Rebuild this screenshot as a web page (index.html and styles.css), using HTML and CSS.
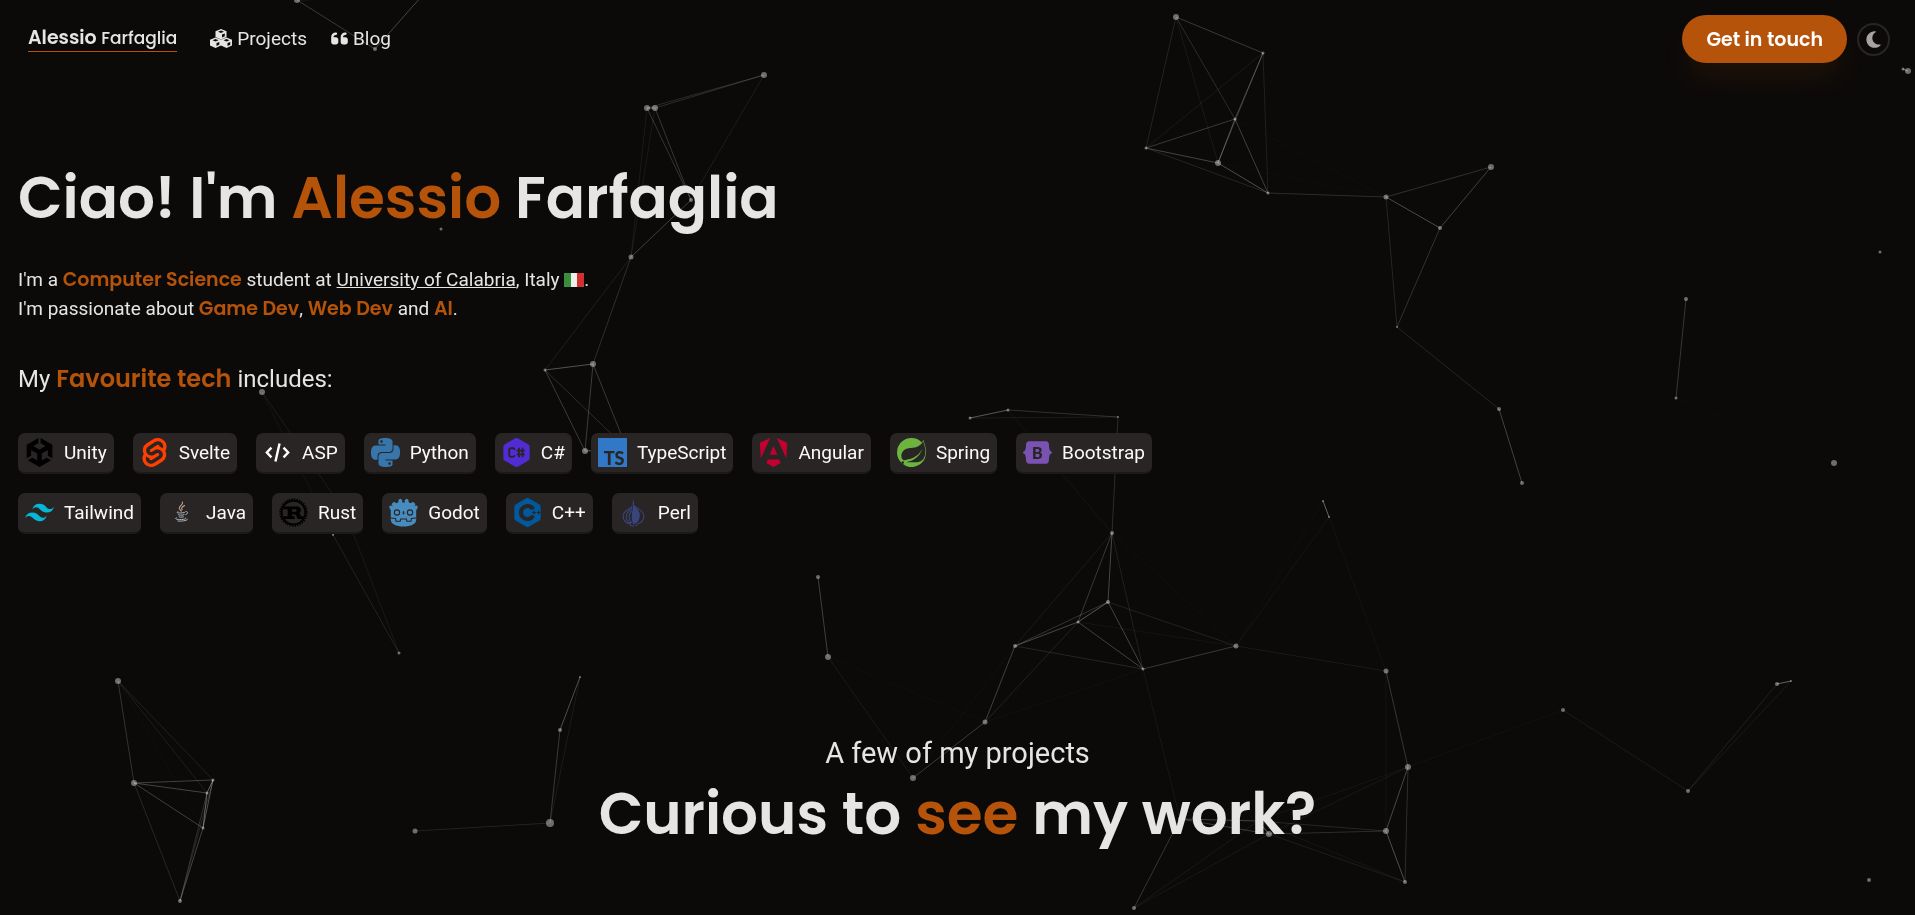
FILE: index.html
```html
<!DOCTYPE html>
<html lang="en">
<head>
<meta charset="utf-8">
<meta name="viewport" content="width=device-width, initial-scale=1">
<title>Alessio Farfaglia</title>
<link rel="stylesheet" href="styles.css">
<script src="network.js" defer></script>
</head>
<body>
<canvas class="network" id="network" aria-hidden="true"></canvas>

<header class="topbar">
  <nav class="topbar-nav" aria-label="Main">
    <a class="brand" href="#"><span class="brand-first">Alessio</span> <span class="brand-last">Farfaglia</span></a>
    <a class="nav-link" href="#projects">
      <svg class="nav-icon nav-icon-wide" viewBox="0 0 22 19" aria-hidden="true">
        <path class="cube" d="M11 0 16.5 2.2V8L11 10.6 5.500 8V2.200Z M5.500 8.400 11 10.800V16.400L5.500 19 0 16.400V10.800Z M16.500 8.400 22 10.800V16.400L16.500 19 11 16.400V10.800Z"/>
        <path class="cube-face" d="M11 1.500 14 2.700 11 3.900 8 2.700Z M5.500 10 8.500 11.200 5.500 12.400 2.500 11.200Z M16.500 10 19.500 11.200 16.500 12.400 13.500 11.200Z M12 5.600 14.800 4.400V7.200L12 8.500Z M6.500 14.100 9.300 12.900V15.700L6.500 17Z M17.500 14.100 20.300 12.900V15.700L17.500 17Z"/>
      </svg>Projects</a>
    <a class="nav-link" href="#blog">
      <svg class="nav-icon" viewBox="0 0 448 512" aria-hidden="true"><path d="M0 216C0 149.700 53.700 96 120 96h8c17.700 0 32 14.300 32 32s-14.300 32-32 32h-8c-30.900 0-56 25.100-56 56v8h64c35.300 0 64 28.700 64 64v64c0 35.300-28.700 64-64 64H64c-35.300 0-64-28.700-64-64V216zm256 0c0-66.300 53.700-120 120-120h8c17.700 0 32 14.300 32 32s-14.300 32-32 32h-8c-30.900 0-56 25.100-56 56v8h64c35.300 0 64 28.700 64 64v64c0 35.300-28.700 64-64 64H320c-35.300 0-64-28.700-64-64V216z"/></svg>Blog</a>
  </nav>
  <div class="topbar-actions">
    <button class="cta" type="button">Get in touch</button>
    <button class="theme-toggle" type="button" aria-label="Toggle dark mode">
      <svg class="theme-icon" viewBox="0 0 384 512" aria-hidden="true"><path d="M223.500 32C100 32 0 132.300 0 256S100 480 223.500 480c60.600 0 115.500-24.200 155.800-63.400c5-4.900 6.300-12.500 3.100-18.700s-10.100-9.700-17-8.500c-9.800 1.700-19.800 2.600-30.100 2.600c-96.900 0-175.500-78.800-175.500-176c0-65.800 36-123.100 89.300-153.300c6.100-3.500 9.200-10.500 7.700-17.300s-7.300-11.900-14.300-12.500c-6.300-.5-12.600-.8-19-.8z"/></svg>
    </button>
  </div>
</header>

<main>
  <section class="hero">
    <h1 class="display">Ciao! I'm <span class="accent">Alessio</span> Farfaglia</h1>
    <p class="intro">I'm a <strong>Computer Science</strong> student at <a href="#unical">University of Calabria</a>, Italy <svg class="flag" viewBox="0 0 20 14" role="img" aria-label="Flag of Italy"><rect width="20" height="14" rx="2" fill="#eeeeee"/><path fill="#388e3c" d="M2 0H7V14H2A2 2 0 0 1 0 12V2A2 2 0 0 1 2 0Z"/><path fill="#d32f2f" d="M13 0H18A2 2 0 0 1 20 2V12A2 2 0 0 1 18 14H13Z"/></svg>.<br>
    I'm passionate about <strong>Game Dev</strong>, <strong>Web Dev</strong> and <strong>AI</strong>.</p>
    <h2 class="tech-title">My <strong>Favourite tech</strong> includes:</h2>
    <ul class="tech-list">
      <li class="chip"><svg class="chip-icon" viewBox="0 0 24 24" fill="#000" aria-hidden="true"><path d="m12.9288 4.2939 3.7997 2.1929c.1366.077.1415.2905 0 .3675l-4.515 2.6076a.4192.4192 0 0 1-.4246 0L7.274 6.8543c-.139-.0745-.1415-.293 0-.3675l3.7972-2.193V0L1.3758 5.5977V16.793l3.7177-2.1456v-4.3858c-.0025-.1565.1813-.2682.318-.1838l4.5148 2.6076a.4252.4252 0 0 1 .2136.3676v5.2127c.0025.1565-.1813.2682-.3179.1838l-3.7996-2.1929-3.7178 2.1457L12 24l9.6954-5.5977-3.7178-2.1457-3.7996 2.1929c-.1341.082-.3229-.0248-.3179-.1838V13.053c0-.1565.087-.2956.2136-.3676l4.5149-2.6076c.134-.082.3228.0224.3179.1838v4.3858l3.7177 2.1456V5.5977L12.9288 0Z"/></svg>Unity</li>
      <li class="chip"><svg class="chip-icon" viewBox="0 0 24 24" fill="#ff3e00" aria-hidden="true"><path d="M10.354 21.125a4.44 4.44 0 0 1-4.765-1.767 4.109 4.109 0 0 1-.703-3.107 3.898 3.898 0 0 1 .134-.522l.105-.321.287.21a7.21 7.21 0 0 0 2.186 1.092l.208.063-.02.208a1.253 1.253 0 0 0 .226.83 1.337 1.337 0 0 0 1.435.533 1.231 1.231 0 0 0 .343-.15l5.59-3.562a1.164 1.164 0 0 0 .524-.778 1.242 1.242 0 0 0-.211-.937 1.338 1.338 0 0 0-1.435-.533 1.23 1.23 0 0 0-.343.15l-2.133 1.36a4.078 4.078 0 0 1-1.135.499 4.44 4.44 0 0 1-4.765-1.766 4.108 4.108 0 0 1-.702-3.108 3.855 3.855 0 0 1 1.742-2.582l5.589-3.563a4.072 4.072 0 0 1 1.135-.499 4.44 4.44 0 0 1 4.765 1.767 4.109 4.109 0 0 1 .703 3.107 3.943 3.943 0 0 1-.134.522l-.105.321-.286-.21a7.204 7.204 0 0 0-2.187-1.093l-.208-.063.02-.207a1.255 1.255 0 0 0-.226-.831 1.337 1.337 0 0 0-1.435-.532 1.231 1.231 0 0 0-.343.15L8.62 9.368a1.162 1.162 0 0 0-.524.778 1.24 1.24 0 0 0 .211.937 1.338 1.338 0 0 0 1.435.533 1.235 1.235 0 0 0 .344-.151l2.132-1.36a4.067 4.067 0 0 1 1.135-.498 4.44 4.44 0 0 1 4.765 1.766 4.108 4.108 0 0 1 .702 3.108 3.857 3.857 0 0 1-1.742 2.583l-5.589 3.562a4.072 4.072 0 0 1-1.135.499m10.358-17.95C18.484-.015 14.082-.96 10.9 1.068L5.31 4.63a6.412 6.412 0 0 0-2.896 4.295 6.753 6.753 0 0 0 .666 4.336 6.43 6.43 0 0 0-.96 2.396 6.833 6.833 0 0 0 1.168 5.167c2.229 3.19 6.63 4.135 9.812 2.108l5.59-3.562a6.41 6.41 0 0 0 2.896-4.295 6.756 6.756 0 0 0-.665-4.336 6.429 6.429 0 0 0 .958-2.396 6.831 6.831 0 0 0-1.167-5.168Z"/></svg>Svelte</li>
      <li class="chip"><svg class="chip-icon" viewBox="0 0 24 24" fill="none" stroke="#fff" stroke-width="2" aria-hidden="true"><path d="M7 8 3.200 12 7 16M17 8 20.800 12 17 16M13.700 4.600 10.300 19.400"/></svg>ASP</li>
      <li class="chip"><svg class="chip-icon" viewBox="0 0 24 24" fill="#3776ab" aria-hidden="true"><path d="M14.25.18l.9.2.73.26.59.3.45.32.34.34.25.34.16.33.1.3.04.26.02.2-.01.13V8.500l-.05.63-.13.55-.21.46-.26.38-.3.31-.33.25-.35.19-.35.14-.33.1-.3.07-.26.04-.21.02H8.770l-.69.05-.59.14-.5.22-.41.27-.33.32-.27.35-.2.36-.15.37-.1.35-.07.32-.04.27-.02.21v3.060H3.170l-.21-.03-.28-.07-.32-.12-.35-.18-.36-.26-.36-.36-.35-.46-.32-.59-.28-.73-.21-.88-.14-1.050-.05-1.230.06-1.220.16-1.040.24-.87.32-.71.36-.57.4-.44.42-.33.42-.24.4-.16.36-.1.32-.05.24-.01h.16l.06.01h8.160v-.83H6.180l-.01-2.750-.02-.37.05-.34.11-.31.17-.28.25-.26.31-.23.38-.2.44-.18.51-.15.58-.12.64-.1.71-.06.77-.04.84-.02 1.270.05zm-6.300 1.980l-.23.33-.08.41.08.41.23.34.33.22.41.09.41-.09.33-.22.23-.34.08-.41-.08-.41-.23-.33-.33-.22-.41-.09-.41.09zm13.090 3.950l.28.06.32.12.35.18.36.27.36.35.35.47.32.59.28.73.21.88.14 1.040.05 1.230-.06 1.230-.16 1.040-.24.86-.32.71-.36.57-.4.45-.42.33-.42.24-.4.16-.36.09-.32.05-.24.02-.16-.01h-8.220v.82h5.840l.01 2.760.02.36-.05.34-.11.31-.17.29-.25.25-.31.24-.38.2-.44.17-.51.15-.58.13-.64.09-.71.07-.77.04-.84.01-1.270-.04-1.070-.14-.9-.2-.73-.25-.59-.3-.45-.33-.34-.34-.25-.34-.16-.33-.1-.3-.04-.25-.02-.2.01-.13v-5.340l.05-.64.13-.54.21-.46.26-.38.3-.32.33-.24.35-.2.35-.14.33-.1.3-.06.26-.04.21-.02.13-.01h5.840l.69-.05.59-.14.5-.21.41-.28.33-.32.27-.35.2-.36.15-.36.1-.35.07-.32.04-.28.02-.21V6.070h2.090l.14.01zm-6.470 14.250l-.23.33-.08.41.08.41.23.33.33.23.41.08.41-.08.33-.23.23-.33.08-.41-.08-.41-.23-.33-.33-.23-.41-.08-.41.08z"/></svg>Python</li>
      <li class="chip"><svg class="chip-icon" viewBox="0 0 24 24" aria-hidden="true"><path fill="#512bd4" d="M12 0Q12.600 0 13.100.3L21.900 5.300Q22.900 5.900 22.900 7V17Q22.900 18.100 21.900 18.700L13.100 23.700Q12 24.300 10.900 23.700L2.100 18.700Q1.100 18.100 1.100 17V7Q1.100 5.900 2.100 5.300L10.900.3Q11.400 0 12 0Z"/><g fill="none" stroke="#292524" stroke-width="1.500"><path d="M10.300 10V9.700Q10.300 8.400 9 8.400H7.500Q6 8.400 6 9.900V14.100Q6 15.600 7.500 15.600H9Q10.300 15.600 10.300 14.300V14M14 8V16M17 8V16M12.200 10.500H18.800M12.200 13.500H18.800"/></g></svg>C#</li>
      <li class="chip"><svg class="chip-icon" viewBox="0 0 24 24" aria-hidden="true"><path fill="#3178c6" d="M0 0H24V24H0Z"/><text class="ts-mark" x="22" y="22">TS</text></svg>TypeScript</li>
      <li class="chip"><svg class="chip-icon" viewBox="0 0 24 24" fill="#c3002f" aria-hidden="true"><path d="M16.712 17.711H7.288l-1.204 2.916L12 24l5.916-3.373-1.204-2.916ZM14.692 0l7.832 16.855.814-12.856L14.692 0ZM9.308 0 .662 3.999l.814 12.856L9.308 0Zm-.405 13.930h6.198L12 6.396 8.903 13.930Z"/></svg>Angular</li>
      <li class="chip"><svg class="chip-icon" viewBox="0 0 24 24" fill="#6db33f" aria-hidden="true"><path d="M21.8537 1.4158a10.4504 10.4504 0 0 1-1.284 2.2471A11.9666 11.9666 0 1 0 3.8518 20.7757l.4445.3951a11.9543 11.9543 0 0 0 19.6316-8.2971c.3457-3.0126-.568-6.8649-2.0742-11.458zM5.5805 20.8745a1.0174 1.0174 0 1 1-.1482-1.4323 1.0396 1.0396 0 0 1 .1482 1.4323zm16.1991-3.5806c-2.9385 3.9263-9.2601 2.5928-13.2852 2.7904 0 0-.7161.0494-1.4323.1481 0 0 .2717-.1234.6174-.2469 2.8398-.9877 4.1732-1.1853 5.9018-2.0743 3.2349-1.6545 6.4698-5.2844 7.1118-9.0379-1.2347 3.6053-4.9881 6.7167-8.3959 7.9761-2.3459.8643-6.5685 1.7039-6.5685 1.7039l-.1729-.0988c-2.8645-1.4076-2.9632-7.6304 2.2718-9.6306 2.2966-.889 4.4696-.395 6.9637-.9877 2.6422-.6174 5.7043-2.5929 6.939-5.1857 1.3828 4.1732 3.062 10.643.0493 14.6434z"/></svg>Spring</li>
      <li class="chip"><svg class="chip-icon" viewBox="0 0 24 24" aria-hidden="true"><path fill="#7952b3" d="M5 2.600H19Q21.300 2.800 21.500 5.500C21.600 8.600 21.800 10.700 24 11.500V12.500C21.800 13.300 21.600 15.400 21.500 18.500Q21.300 21.200 19 21.400H5Q2.700 21.200 2.500 18.500C2.400 15.400 2.200 13.300 0 12.500V11.500C2.200 10.700 2.400 8.600 2.500 5.500Q2.700 2.800 5 2.600Z"/><text class="b-mark" x="12" y="17">B</text></svg>Bootstrap</li>
      <li class="chip"><svg class="chip-icon" viewBox="0 0 24 24" fill="#06b6d4" aria-hidden="true"><path d="M12 4.800c-3.200 0-5.200 1.600-6 4.800 1.200-1.600 2.600-2.200 4.200-1.800.913.228 1.565.89 2.288 1.624C13.666 10.618 15.027 12 18 12c3.200 0 5.200-1.600 6-4.800-1.200 1.600-2.600 2.200-4.200 1.800-.913-.228-1.565-.89-2.288-1.624C16.337 6.182 14.976 4.800 12 4.800ZM6 12c-3.200 0-5.200 1.600-6 4.800 1.200-1.600 2.600-2.200 4.200-1.800.913.228 1.565.89 2.288 1.624C7.666 17.818 9.027 19.200 12 19.200c3.200 0 5.200-1.600 6-4.800-1.200 1.600-2.600 2.200-4.200 1.800-.913-.228-1.565-.89-2.288-1.624C10.337 13.382 8.976 12 6 12Z"/></svg>Tailwind</li>
      <li class="chip"><svg class="chip-icon" viewBox="-2 0 33 33" fill="none" stroke-linecap="round" aria-hidden="true"><path stroke="#c9a893" stroke-width="1.200" d="M15.500 4.500C17 8 10.500 9.500 12.200 12.500L14.300 15M18 8.500C15.500 10 13.800 11.200 15.200 13.200"/><path stroke="#b3b9c2" stroke-width="1.100" d="M10.500 15.500C8 16.500 10 17 13.500 17C15.500 17 17 16.800 18 16.400M10.800 18.500C10 19.500 14 20.200 17.300 19M11.500 21C11 22 14.500 22.300 16.800 21.400M19.500 15.300C22.500 15.300 22 18 19.300 18.800M8.500 22.500C5.500 24 11 24.700 14.500 24.500C18 24.300 20 23.800 19.500 22.800M10.500 26.200C15 26.500 20 26 21.200 24.500"/></svg>Java</li>
      <li class="chip"><svg class="chip-icon" viewBox="0 0 24 24" aria-hidden="true"><circle cx="12" cy="12" r="10.900" fill="none" stroke="#000" stroke-width="1.700" stroke-dasharray="1.200 .94"/><circle cx="12" cy="12" r="9.800" fill="none" stroke="#000" stroke-width="1.600"/><path fill="#000" fill-rule="evenodd" d="M4 7H14.500C17.300 7 18.200 8.500 18.200 10C18.200 11.400 17.400 12.200 16.700 12.500C17.800 13 17.500 15 18.600 15H20.400V17.300H16C14.800 17.300 14.700 14 13.300 13.700H10.800V15H13V17.300H3.800V15H7.200V9.300H4ZM10.800 9.300V11.400H13.600C14.900 11.400 14.900 9.300 13.600 9.300Z"/></svg>Rust</li>
      <li class="chip"><svg class="chip-icon" viewBox="0 0 24 24" aria-hidden="true"><path fill="#478cbf" d="M9.600.6 11 1.900 10.900 3.700Q12 3.600 13.100 3.700L13 1.900 14.400.6 16 1.200 16.300 3.600 17.900 4.400 19.900 3.100 21.900 4.900 20.900 7 22.300 5.900 24 7.300Q23.300 9.200 22.500 10.200V18C22.500 21.600 18 23.600 12 23.600S1.500 21.600 1.500 18V10.200Q.7 9.200 0 7.300L1.700 5.900 3.100 7 2.100 4.900 4.100 3.100 6.100 4.400 7.700 3.600 8 1.200Z"/><g fill="none" stroke="#292524" stroke-width=".9"><circle cx="6.600" cy="12" r="2.200"/><circle cx="17.400" cy="12" r="2.200"/><path d="M12 11V13.500" stroke-width="1.300"/><path d="M1.500 16.600 5.500 17 5.800 19.200H9.300L9.600 17.400H14.400L14.700 19.200H18.200L18.500 17 22.500 16.600"/></g></svg>Godot</li>
      <li class="chip"><svg class="chip-icon" viewBox="0 0 24 24" aria-hidden="true"><path fill="#00599c" d="M12 0Q12.600 0 13.100.3L21.900 5.300Q22.900 5.900 22.900 7V17Q22.900 18.100 21.900 18.700L13.100 23.700Q12 24.300 10.900 23.700L2.100 18.700Q1.100 18.100 1.100 17V7Q1.100 5.900 2.100 5.300L10.900.3Q11.400 0 12 0Z"/><path fill="none" stroke="#292524" stroke-width="3.400" d="M16.700 9.300A5.400 5.400 0 1 0 16.700 14.700"/><path fill="none" stroke="#292524" stroke-width=".9" d="M15.800 12H19M17.400 10.400V13.600M19.600 12H22.800M21.200 10.400V13.600"/></svg>C++</li>
      <li class="chip"><svg class="chip-icon" viewBox="0 0 24 24" aria-hidden="true"><path fill="#39457e" d="M11.600 1C12.300 2.500 12.600 4.500 12.500 5.800C14 8.500 17.200 10 17.200 14.500C17.200 18.300 15 21 12.200 21.800C10.800 20 10.400 17 10.600 14C10.800 10.500 12 8.500 11.500 5.800C11.300 4.500 11.500 2.500 11.600 1Z"/><g fill="none" stroke="#39457e" stroke-width=".9"><path d="M11 6.800C9 9.500 3.400 10.300 3.400 14.900C3.400 18.500 6 20.800 9.600 21.700M11 8.300C9 11 6 11.500 6 15C6 18 7.500 20 10 21M10.700 10.500C9.200 12.500 8.300 13 8.300 15.200C8.300 17.500 9.300 19.500 10.500 20.700M13.500 6.800C15.600 9.500 20.600 10.300 20.600 14.900C20.600 18.500 18 20.800 14.500 21.700M9 22.800H10.500M11.700 22V24M13.500 22.800H15"/></g></svg>Perl</li>
    </ul>
  </section>

  <section class="projects" id="projects">
    <p class="kicker">A few of my projects</p>
    <h2 class="display">Curious to <span class="accent">see</span> my work?</h2>
  </section>
</main>
</body>
</html>
```

FILE: styles.css
```css
:root {
  --bg: #0c0a09;
  --surface: #292524;
  --surface-edge: #1c1a19;
  --text: #e7e5e4;
  --accent: #b45309;
  --body-font: Roboto, "Liberation Sans", sans-serif;
  --display-font: Poppins, Inter, "Open Sans", sans-serif;
}

* { box-sizing: border-box; }

body {
  margin: 0;
  background: var(--bg);
  color: var(--text);
  font-family: var(--body-font);
  font-size: 19px;
  line-height: 29px;
}

a { color: inherit; }
h1, h2, p, ul { margin: 0; padding: 0; }

.network {
  position: fixed;
  inset: 0;
  z-index: -1;
  width: 100%;
  height: 100%;
}

.topbar {
  display: flex;
  justify-content: space-between;
  align-items: center;
  padding: 15px 25px 15px 28px;
}

.topbar-nav, .topbar-actions {
  display: flex;
  align-items: center;
}

.topbar-nav { gap: 24px; padding-bottom: 2px; }
.topbar-actions { gap: 10px; }

.brand {
  margin-right: 9px;
  border-bottom: 1px solid var(--accent);
  font-family: var(--display-font);
  font-size: 17px;
  line-height: 26px;
  text-decoration: none;
}

.brand-first { font-size: 19px; font-weight: 600; }
.brand-last { font-weight: 500; }

.nav-link {
  display: flex;
  align-items: center;
  gap: 5px;
  text-decoration: none;
}

.nav-icon { width: 17px; height: 19px; fill: var(--text); }
.nav-icon-wide { width: 22px; }
.nav-icon .cube-face { fill: var(--bg); }

.cta {
  height: 48px;
  padding: 2px 24px 0;
  border: 0;
  border-radius: 24px;
  background: var(--accent);
  box-shadow: 0 19px 28px -6px rgba(180, 83, 9, 0.12);
  color: #fff;
  font: 600 19px/28px var(--display-font);
}

.theme-toggle {
  display: grid;
  place-items: center;
  width: 33px;
  height: 33px;
  padding: 0;
  border: 2px solid #292524;
  border-radius: 50%;
  background: transparent;
}

.theme-icon { width: 15px; height: 19px; fill: #a8a2a4; }

.hero { padding: 77px 18px 0; }

.display {
  font: 600 58px/86px var(--display-font);
}

.accent { color: var(--accent); }

strong {
  color: var(--accent);
  font-family: var(--display-font);
  font-weight: 600;
}

.intro { margin-top: 24px; }

.flag { width: 20px; height: 14px; vertical-align: -1px; }

.tech-title {
  margin-top: 38px;
  font-size: 24px;
  font-weight: 400;
  line-height: 36px;
}

.tech-list {
  display: flex;
  flex-wrap: wrap;
  gap: 19px;
  max-width: 1240px;
  margin-top: 36px;
  list-style: none;
}

.chip {
  display: flex;
  align-items: center;
  gap: 10px;
  padding: 5px 7px;
  border-bottom: 2px solid var(--surface-edge);
  border-radius: 7px;
  background: var(--surface);
  color: #fafaf9;
}

.chip-icon { width: 29px; height: 29px; }
.ts-mark { fill: #292524; font: 900 15px Lato, sans-serif; text-anchor: end; }
.b-mark { fill: #292524; font: 700 14px Roboto, sans-serif; text-anchor: middle; }

.projects {
  padding: 201px 18px 0;
  text-align: center;
}

.kicker { font-size: 29px; line-height: 36px; }
```

FILE: network.js
```js
// Each node: x, y, radius, on a 1915 x 915 field that stretches with the window.
const FIELD = { width: 1915, height: 915 };
const LINK_DISTANCE = 180;
const nodes = [
  [297, 0, 3], [375, 49, 2], [421, -3, 2], [441, 229, 1.5], [262, 392, 3],
  [345, 512, 2], [333, 535, 1], [764, 75, 3], [647, 108, 3], [655, 108, 3],
  [691, 200, 2], [631, 257, 2.5], [545, 370, 1.5], [593, 364, 3],
  [585, 451, 3], [627, 449, 2], [970, 418, 1.5], [1008, 410, 1.5],
  [1118, 417, 1], [1112, 533, 2], [1176, 17, 3], [1263, 53, 1.5],
  [1146, 148, 1.5], [1235, 119, 1.5], [1218, 163, 3], [1268, 193, 1.5],
  [1386, 197, 2.5], [1491, 167, 3], [1440, 228, 2], [1397, 327, 1],
  [1499, 409, 2], [1522, 483, 2], [1676, 398, 1.5], [1686, 299, 2],
  [1834, 463, 3], [1880, 252, 1.5], [1908, 71, 3], [1903, 69, 1.5],
  [118, 681, 3], [134, 783, 3], [213, 780, 1.5], [207, 793, 1.5],
  [203, 828, 1.5], [180, 901, 2], [399, 653, 1.5], [415, 831, 2.5],
  [550, 823, 4], [560, 730, 2], [580, 677, 1], [818, 577, 2],
  [828, 657, 3], [1108, 602, 2], [1078, 622, 1.5], [1015, 646, 2],
  [1236, 646, 2.5], [1143, 669, 1.5], [985, 722, 2.5], [913, 778, 3],
  [1134, 908, 2], [1180, 819, 2], [1258, 821, 2], [1323, 501, 1],
  [1329, 517, 1], [1386, 671, 2.5], [1408, 767, 3], [1386, 831, 3],
  [1269, 834, 3], [1405, 882, 2], [1563, 710, 2], [1688, 791, 2],
  [1777, 684, 2], [1791, 681, 1], [1869, 880, 2]
];

const canvas = document.getElementById("network");
const ctx = canvas.getContext("2d");

function draw() {
  canvas.width = window.innerWidth;
  canvas.height = window.innerHeight;
  const sx = canvas.width / FIELD.width;
  const sy = canvas.height / FIELD.height;

  nodes.forEach(([x, y], i) => {
    nodes.slice(i + 1).forEach(([x2, y2]) => {
      const distance = Math.hypot(x2 - x, y2 - y);
      if (distance >= LINK_DISTANCE) return;
      ctx.strokeStyle = `rgba(255, 255, 255, ${0.4 * (1 - distance / LINK_DISTANCE)})`;
      ctx.beginPath();
      ctx.moveTo(x * sx, y * sy);
      ctx.lineTo(x2 * sx, y2 * sy);
      ctx.stroke();
    });
  });

  ctx.fillStyle = "rgba(255, 255, 255, 0.4)";
  nodes.forEach(([x, y, r]) => {
    ctx.beginPath();
    ctx.arc(x * sx, y * sy, r, 0, Math.PI * 2);
    ctx.fill();
  });
}

window.addEventListener("resize", draw);
draw();
```
